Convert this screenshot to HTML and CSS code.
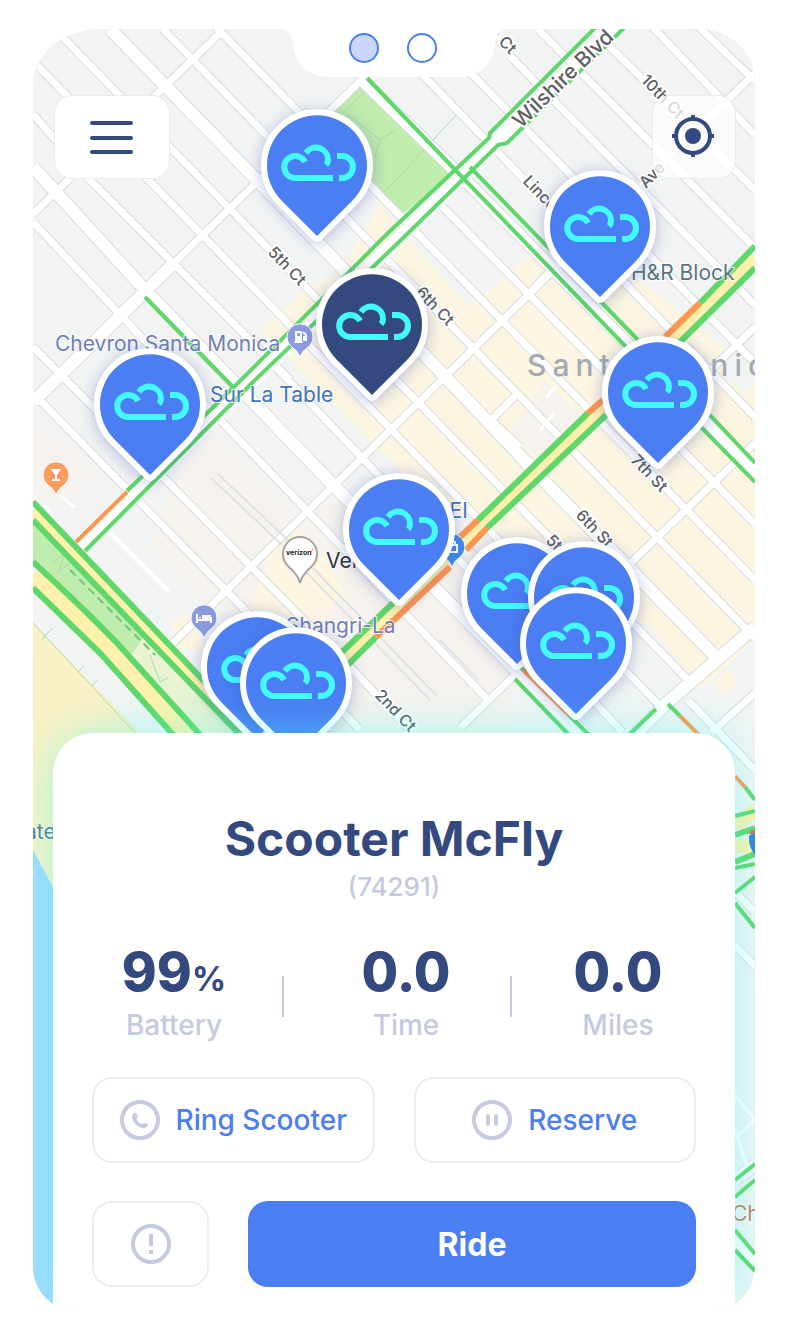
FILE: index.html
```html
<!DOCTYPE html>
<html lang="en">
<head>
<meta charset="utf-8">
<meta name="viewport" content="width=device-width, initial-scale=1">
<title>Scooter McFly</title>
<link rel="stylesheet" href="styles.css">
</head>
<body>
<main class="phone">
  <svg class="map" viewBox="33 29 722 1282" preserveAspectRatio="xMidYMid slice" role="img" aria-label="Map of Santa Monica with scooters">
    <defs>
      <path id="streets" d="M33 61L661 707M50 24L688 680M163 29L755 638M213 24L755 580M430 194L755 524M420 72L755 417M464 66L755 363M510 56L755 305M538 29L755 248M592 29L755 190M650 24L755 135M696 24L755 81M33 114L90 180L290 380M250 340L618 727L622 732M33 222L160 357L488 700M33 347L163 477L353 670L412 732M33 393L247 612L360 730M220 33L33 214M395 47L175 262M755 73L173 643M548 273L530 293M518 393L491 420L520 447M755 443L461 727M755 693L712 732M755 327L690 390M688 700L755 770M735 892L755 912M735 945L755 966"/>
      <path id="avenues" d="M110 29L325 250L545 482L716 657M33 167L145 290L335 487L585 740M175 262L33 402M362 80L470 185L755 473M755 627L668 702L630 740M735 1180L755 1165M735 1240L755 1262"/>
      <g id="cloud">
        <path d="M16 13H-22A11 11 0 1 1 -12 -3M-11 -12A12 12 0 0 1 11 -5Q11 -2 9 0M20 -9H25A11 11 0 0 1 25 13H22"/>
      </g>
      <g id="scooter">
        <path class="pin-body" d="M0 71L-35 36A50 50 0 1 1 35 36Z"/>
        <use href="#cloud"/>
      </g>
      <path id="poi" d="M0 20Q-2 14 -8 10A13 13 0 1 1 8 10Q2 14 0 20Z"/>
    </defs>

    <rect class="land" x="33" y="29" width="722" height="1282"/>
    <path class="downtown" d="M380 205L470 307L548 240H590L728 350L722 378L745 392L755 382V640L700 690L650 625L560 600L400 470L260 330L305 290L340 270Z"/>
    <path class="land" d="M410 240L470 307L530 255L500 225ZM722 350L755 330V380L742 392Z"/>
    <path class="civic" d="M213 430L300 520L400 470L520 560L515 732H300L240 640L150 545L180 470ZM33 425L70 445L95 475L70 500H33ZM545 380L585 420L540 462L510 432Z"/>
    <path class="downtown" d="M273 540L300 525L345 590L320 625L250 610ZM170 620L195 612L205 650H180ZM713 683L722 698L738 682L728 668Z"/>
    <path class="park" d="M366 82L456 172L404 213L310 125Z"/>
    <path class="trail" d="M371 85L345 112L380 140L395 130M456 115L385 192M380 140L375 158"/>
    <path class="verge" d="M33 520L248 742H200L33 562Z"/>
    <path class="park" d="M33 520L145 635L130 657L33 562Z"/>
    <path class="sand" d="M33 623L140 732V1311H33Z"/>
    <path class="sea" d="M33 850L56 893V1311H33Z"/>
    <path class="fence" d="M33 623L140 738M42 640L52 628M78 672L84 666M92 686L97 680M60 540L218 706M150 655L160 682L168 678M53 562L66 552L58 572L71 562"/>
    <path class="fence-dash" d="M70 570L155 655"/>

    <use href="#streets" class="street-edge"/>
    <use href="#avenues" class="avenue-edge"/>
    <use href="#streets" class="street"/>
    <use href="#avenues" class="avenue"/>
    <path class="rail" d="M211 478L282 545M218 474L289 541M306 572L430 700M313 568L437 696M440 640L478 680M452 530L520 590"/>
    <path class="alley" d="M110 533L167 590"/>
    <path class="alley-thin" d="M45 505L58 525M60 495L75 508M546 398L556 386M540 430L554 414M735 1095L755 1120L738 1135M735 1130L750 1175"/>

    <path class="wilshire" d="M76 550L146 484L394 244L500 139L620 24"/>
    <path class="boulevard" d="M290 716L458 550L755 258"/>
    <path class="highway" d="M33 511L252 742"/>
    <path class="highway-wide" d="M33 575Q80 618 108 648L188 738"/>
    <path class="boulevard" d="M735 826L755 810M735 846H755"/>

    <g class="traffic">
      <path d="M599 24L490 133L489 138L388 233L234 387L127 491M628 24L507 143L498 145L400 241L252 383L85 551"/>
      <path d="M367 78L465 180L626 347M470 167L638 340M701 427L755 482M710 415L755 463M145 297L233 387"/>
      <path d="M515 679L570 736M520 667L526 672M570 716L590 736M656 709L628 736M668 704L680 716M745 787L755 800M735 903L755 928"/>
      <path d="M735 1180L755 1164M735 1197L755 1180M735 1230L755 1254M735 1250L755 1271"/>
      <path class="traffic-wide" d="M755 246L700 303M755 268L680 342M588 413L478 520M606 415L487 528M393 603L290 702M376 637L300 712"/>
      <path class="traffic-wide" d="M33 502L265 745M33 520L245 740M33 562Q80 605 117 643L203 738M33 588L100 653L176 738M735 835L755 828M735 862L755 854"/>
      <path d="M735 816L755 811M735 868L755 864M735 893L755 877"/>
      <path class="slow" d="M127 492L76 542M523 670L570 716M680 716L704 740M735 776L745 787"/>
      <path class="slow traffic-wide" d="M700 303L665 337M603 400L588 413M478 520L460 537M487 528L466 550M450 567L376 637"/>
    </g>

    <g class="label">
      <text x="55" y="351" class="place-violet">Chevron Santa Monica</text>
      <text x="210" y="402" class="place-blue">Sur La Table</text>
      <text x="631" y="280" class="place-slate">H&amp;R Block</text>
      <text x="326" y="568" class="place-dark">Verizon</text>
      <text x="436" y="518" class="place-blue">REI</text>
      <text x="286" y="633" class="place-violet">Shangri-La</text>
      <text x="25" y="839" class="place-slate">ate</text>
      <text x="732" y="1221" class="place-rust">Ch</text>
    </g>
    <text class="city" x="527" y="376">Santa Monica</text>
    <g class="road-label">
      <text class="road-main" transform="translate(521 129) rotate(-44)">Wilshire Blvd</text>
      <text transform="translate(267 253) rotate(46)">5th Ct</text>
      <text transform="translate(415 293) rotate(46)">6th Ct</text>
      <text transform="translate(478 22) rotate(46)">7th Ct</text>
      <text transform="translate(640 81) rotate(46)">10th Ct</text>
      <text transform="translate(522 182) rotate(46)">Lincoln</text>
      <text transform="translate(646 189) rotate(-46)">Ave</text>
      <text transform="translate(630 461) rotate(46)">7th St</text>
      <text transform="translate(575 516) rotate(46)">6th St</text>
      <text transform="translate(545 541) rotate(46)">5th St</text>
      <text transform="translate(374 696) rotate(46)">2nd Ct</text>
    </g>

    <g transform="translate(300 337)">
      <use href="#poi" class="poi-violet"/>
      <path class="poi-glyph" d="M-5 -6H2V5H3V6H-6V5H-5ZM-3 -4V-1H0V-4Z"/>
      <path class="poi-line" d="M3 -5L6 -2V3H4V-1"/>
    </g>
    <g transform="translate(204 618)">
      <use href="#poi" class="poi-violet"/>
      <path class="poi-line" d="M-7 -4V5M-7 2H7M7 5V0H-1V-2H6V0M-4 -1V0"/>
    </g>
    <g transform="translate(56 475)">
      <use href="#poi" class="poi-orange"/>
      <path class="poi-glyph" d="M-5 -6H5L1 0V4H4V6H-4V4H-1V0Z"/>
    </g>
    <g transform="translate(452 547)">
      <use href="#poi" class="poi-blue"/>
      <path class="poi-line" d="M-5 -2H5V5H-5ZM-2 -2V-5H3V-2"/>
    </g>
    <path class="poi-brand" d="M300 583Q298 575 289 567A17 17 0 1 1 311 567Q302 575 300 583Z"/>
    <text class="brand" x="286" y="555">verizon</text>
    <path class="brand-tick" d="M311 552L313 549"/>
    <path class="shield" d="M749 836Q752 832 760 833V860Q748 850 749 836Z"/>
    <path class="shield-top" d="M749 834L752 829L760 832V834Z"/>

    <g class="pins">
      <use href="#scooter" x="317" y="165"/>
      <use href="#scooter" x="600" y="226"/>
      <use href="#scooter" x="372" y="324" class="selected"/>
      <use href="#scooter" x="150" y="404"/>
      <use href="#scooter" x="658" y="392"/>
      <use href="#scooter" x="399" y="529"/>
      <use href="#scooter" x="517" y="593"/>
      <use href="#scooter" x="584" y="597"/>
      <use href="#scooter" x="576" y="643"/>
      <use href="#scooter" x="257" y="667"/>
      <use href="#scooter" x="296" y="683"/>
    </g>
  </svg>

  <nav class="notch" aria-label="Screens">
    <svg class="notch-shape" viewBox="0 0 232 48" aria-hidden="true"><path d="M0 0C12 0 14 8 15 17C18 36 32 48 50 48H182C200 48 214 36 217 17C218 8 220 0 232 0Z"/></svg>
    <button class="dot dot-current" type="button" aria-label="Screen 1"></button>
    <button class="dot" type="button" aria-label="Screen 2"></button>
  </nav>

  <header class="toolbar">
    <button class="tool tool-menu" type="button" aria-label="Menu">
      <svg width="44" height="36" viewBox="0 0 44 36" aria-hidden="true"><path class="menu-lines" d="M2 4H41M2 19H41M2 33H41"/></svg>
    </button>
    <button class="tool tool-locate" type="button" aria-label="My location">
      <svg width="44" height="44" viewBox="0 0 44 44" aria-hidden="true"><circle class="locate-ring" cx="21" cy="21" r="17"/><path class="locate-ring" d="M21 0V6M21 36V42M0 21H6M36 21H42"/><circle class="locate-core" cx="21" cy="21" r="8"/></svg>
    </button>
  </header>

  <section class="sheet">
    <h1 class="name">Scooter McFly</h1>
    <p class="number">(74291)</p>
    <div class="stats">
      <div class="stat"><span class="value">99<small class="unit">%</small></span><span class="caption">Battery</span></div>
      <span class="divider"></span>
      <div class="stat stat-time"><span class="value">0.0</span><span class="caption">Time</span></div>
      <span class="divider"></span>
      <div class="stat"><span class="value">0.0</span><span class="caption">Miles</span></div>
    </div>
    <div class="actions">
      <button class="action" type="button">
        <svg class="icon" width="40" height="40" viewBox="0 0 40 40" aria-hidden="true"><circle cx="20" cy="20" r="18"/><path class="icon-fill" d="M14 13C16 12 17 14 18 16C18 18 16 18 17 20C18 22 20 24 22 24C23 24 24 23 25 23C27 23 28 24 28 25C27 27 25 29 22 28C17 27 13 22 12 17C12 15 13 14 14 13Z"/></svg>
        Ring Scooter
      </button>
      <button class="action" type="button">
        <svg class="icon" width="40" height="40" viewBox="0 0 40 40" aria-hidden="true"><circle cx="20" cy="20" r="18"/><path d="M16 16V24M24 16V24" stroke-linecap="round"/></svg>
        Reserve
      </button>
    </div>
    <div class="actions actions-main">
      <button class="action" type="button" aria-label="Report a problem">
        <svg class="icon" width="40" height="40" viewBox="0 0 40 40" aria-hidden="true"><circle cx="20" cy="20" r="18"/><path d="M20 10V22M20 26V30"/></svg>
      </button>
      <button class="action ride" type="button">Ride</button>
    </div>
  </section>
</main>
</body>
</html>
```
FILE: styles.css
```css
* { box-sizing: border-box; }

body {
  margin: 0;
  padding: 29px 33px 33px;
  background: #fff;
  color: #344a7f;
  font-family: Inter, "Open Sans", sans-serif;
}

button {
  margin: 0;
  padding: 0;
  border: 0;
  font: inherit;
  cursor: pointer;
}

.phone {
  position: relative;
  display: flex;
  flex-direction: column;
  min-height: calc(100vh - 62px);
  overflow: hidden;
  border-radius: 68px 56px 44px 44px / 56px 52px 44px 44px;
}

/* Map */
.map {
  position: absolute;
  inset: 0;
  width: 100%;
  height: 100%;
}
.map path { fill: none; }
.map .land { fill: #f2f4f4; }
.map .downtown { fill: #fcf5e2; }
.map .civic { fill: #f6f2ee; }
.map .park { fill: #c0ecae; }
.map .verge { fill: #e9f3d2; }
.map .sand { fill: #fbf1c6; }
.map .sea { fill: #a4d9ff; }
.trail { stroke: #a9dba6; stroke-width: 1; }
.fence { stroke: #a8d9b4; stroke-width: 1; }
.fence-dash { stroke: #6cc77a; stroke-width: 2; stroke-dasharray: 8 5; }

.street-edge { stroke: #dadbdd; stroke-width: 9; }
.avenue-edge { stroke: #dadbdd; stroke-width: 14; }
.street { stroke: #fff; stroke-width: 7; }
.avenue { stroke: #fff; stroke-width: 12; }
.rail { stroke: #dfe2e6; stroke-width: 2; }
.alley { stroke: #fff; stroke-width: 5; stroke-linecap: round; }
.alley-thin { stroke: #fff; stroke-width: 3; }
.wilshire { stroke: #fff; stroke-width: 14; }
.boulevard { stroke: #fff1ad; stroke-width: 14; }
.highway { stroke: #fff1ad; stroke-width: 12; }
.highway-wide { stroke: #fff1ad; stroke-width: 18; }
.traffic { stroke: #5fd76a; stroke-width: 4; }
.traffic-wide { stroke-width: 6; }
.slow { stroke: #ff9650; }

.label {
  font-size: 21px;
  stroke: #fff;
  stroke-width: 2;
  stroke-opacity: .8;
  stroke-linejoin: round;
  paint-order: stroke;
}
.place-violet { fill: #6f7fb3; }
.place-blue { fill: #3f74b8; }
.place-slate { fill: #5b7480; }
.place-dark { fill: #303236; }
.place-rust { fill: #c97a55; }
.city {
  fill: #a3aab2;
  font-size: 30px;
  font-weight: 500;
  letter-spacing: 6px;
}
.road-label {
  fill: #5c6064;
  font-size: 16px;
  font-weight: 500;
  stroke: #fff;
  stroke-width: 4;
  stroke-linejoin: round;
  paint-order: stroke;
}
.road-main { font-size: 21px; }

.poi-violet { fill: #8c9ae0; }
.poi-orange { fill: #ff9c5f; }
.poi-blue { fill: #3f8ee8; }
.map #poi { fill: inherit; stroke: #fff; stroke-width: 1; }
.map .poi-glyph { fill: #fff; fill-rule: evenodd; }
.poi-line { stroke: #fff; stroke-width: 2; }
.map .poi-brand { fill: #fff; stroke: #a4a4a4; stroke-width: 2; }
.brand { fill: #222; font-size: 7px; font-weight: 700; }
.brand-tick { stroke: #f26b3a; stroke-width: 1; }
.map .shield { fill: #2f7fd8; }
.map .shield-top { fill: #d0704f; }

.pins use { fill: #4b7df3; filter: drop-shadow(0 2px 8px rgba(52, 74, 160, .35)); }
.pins .selected { fill: #344a7f; }
.map .pin-body {
  fill: inherit;
  stroke: #fff;
  stroke-width: 12;
  stroke-linejoin: round;
  paint-order: stroke;
}
#cloud { stroke: #43fbff; stroke-width: 6; }
#scooter use { filter: none; }

/* Top */
.notch {
  position: relative;
  align-self: center;
  display: flex;
  justify-content: center;
  gap: 28px;
  width: 232px;
  height: 48px;
  padding: 4px 2px 0 0;
}
.notch-shape {
  position: absolute;
  inset: 0;
  fill: #fff;
}
.dot {
  position: relative;
  width: 30px;
  height: 30px;
  border: 2px solid #4b7df3;
  border-radius: 50%;
  background: #fff;
}
.dot-current { background: #c9d6fb; }

.toolbar {
  position: relative;
  display: flex;
  justify-content: space-between;
  padding: 18px 19px 0 21px;
}
.tool {
  display: grid;
  place-items: center;
  width: 84px;
  height: 84px;
  border: 1px solid #ebebeb;
  border-radius: 18px;
  background: rgba(255, 255, 255, .75);
}
.tool-menu { width: 116px; background: #fff; }
.menu-lines { stroke: #344a7f; stroke-width: 4; stroke-linecap: round; }
.locate-ring { fill: none; stroke: #344a7f; stroke-width: 4; }
.locate-core { fill: #344a7f; }

/* Scooter sheet */
.sheet {
  position: relative;
  margin: auto 20px 0;
  padding: 78px 39px 24px;
  border-radius: 40px 40px 0 0;
  background: #fff;
  box-shadow: 0 0 44px rgba(67, 251, 240, .45);
  text-align: center;
}
.name {
  margin: 0;
  font-size: 48px;
  font-weight: 700;
  line-height: 56px;
}
.number {
  margin: 4px 0 0;
  color: #c5cae0;
  font-size: 26px;
  font-weight: 500;
  line-height: 32px;
}
.stats {
  display: grid;
  grid-template-columns: 218fr 2px 228fr 2px 214fr;
  margin: 39px -28px 0 -26px;
}
.stat {
  display: flex;
  flex-direction: column;
  gap: 5px;
}
.stat-time { padding-left: 18px; }
.value {
  font-size: 53px;
  font-weight: 800;
  line-height: 60px;
}
.unit {
  font-size: 34px;
  font-weight: 700;
  line-height: 1;
}
.caption {
  color: #c5cae0;
  font-size: 28px;
  font-weight: 500;
  line-height: 36px;
}
.divider {
  height: 41px;
  margin-top: 34px;
  background: #c5cae0;
}
.actions {
  display: grid;
  grid-template-columns: 1fr 1fr;
  gap: 39px;
  margin-top: 34px;
}
.actions-main {
  grid-template-columns: 117px 1fr;
  margin-top: 38px;
}
.action {
  display: flex;
  align-items: center;
  justify-content: center;
  gap: 16px;
  height: 86px;
  border: 2px solid #ededed;
  border-radius: 20px;
  background: #fff;
  color: #4b7df3;
  font-size: 28px;
  font-weight: 500;
}
.ride {
  border: 0;
  background: #4b7df3;
  color: #fff;
  font-size: 32px;
  font-weight: 700;
}
.icon { fill: none; stroke: #c5cae0; stroke-width: 4; }
.icon-fill { fill: #c5cae0; stroke: none; }
```
